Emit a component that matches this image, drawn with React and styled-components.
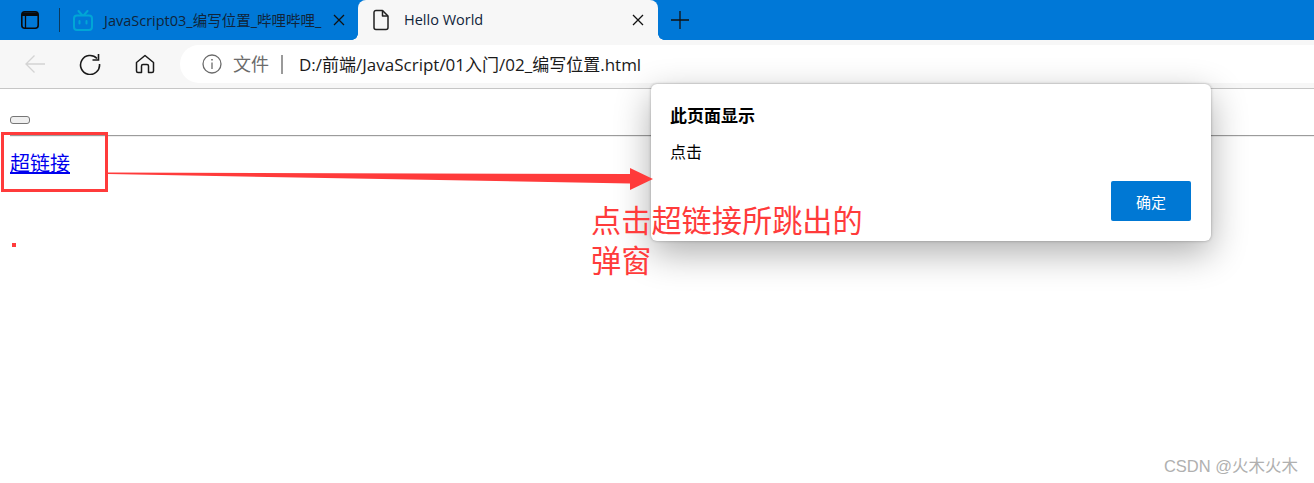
import React from 'react';
import styled, { createGlobalStyle } from 'styled-components';

const chromeBlue = '#0078d7';
const chromeGray = '#f7f7f7';
const markRed = '#ff3b3b';
const uiFont = '"Open Sans", "Noto Sans CJK SC", sans-serif';

const GlobalStyle = createGlobalStyle`
  html, body {
    margin: 0;
    padding: 0;
    background: white;
  }
`;

const Window = styled.div`
  position: relative;
  display: flex;
  flex-direction: column;
  width: 1314px;
  height: 483px;
  overflow: hidden;
  font-family: ${uiFont};
  background: white;
`;

const TabStrip = styled.div`
  display: flex;
  align-items: center;
  height: 40px;
  background: ${chromeBlue};
  color: #111;
`;

const StripButton = styled.div`
  display: flex;
  align-items: center;
  justify-content: center;
  width: ${props => props.width}px;
  height: 40px;
  flex-shrink: 0;
`;

const Divider = styled.div`
  width: 1px;
  height: 24px;
  background: #0b3a5e;
  flex-shrink: 0;
`;

const Tab = styled.div`
  position: relative;
  display: flex;
  align-items: center;
  width: ${props => props.width}px;
  height: 40px;
  flex-shrink: 0;
  box-sizing: border-box;
  padding-left: ${props => props.inset}px;
  font-size: 14.5px;
  white-space: nowrap;
  background: ${props => (props.active ? chromeGray : 'transparent')};
  border-radius: ${props => (props.active ? '8px 8px 0 0' : '0')};

  ${props =>
    props.active &&
    `
    &::before, &::after {
      content: '';
      position: absolute;
      bottom: 0;
      width: 6px;
      height: 6px;
    }
    &::before {
      left: -6px;
      background: radial-gradient(circle at 0 0, transparent 5.5px, ${chromeGray} 6px);
    }
    &::after {
      right: -6px;
      background: radial-gradient(circle at 100% 0, transparent 5.5px, ${chromeGray} 6px);
    }
  `}
`;

const TabTitle = styled.div`
  margin: -2px 0 0 ${props => props.gap}px;
  color: #10243a;
`;

const TabClose = styled.div`
  position: absolute;
  top: 14px;
  right: ${props => props.right}px;
  display: flex;
`;

const Toolbar = styled.div`
  display: flex;
  align-items: center;
  height: 48px;
  background: ${chromeGray};
  border-bottom: 1px solid #c6c6c6;
`;

const NavButton = styled.div`
  display: flex;
  align-items: center;
  justify-content: center;
  width: ${props => props.width}px;
  flex-shrink: 0;
`;

const AddressBar = styled.div`
  display: flex;
  align-items: center;
  flex: 1;
  height: 38px;
  padding-left: 22px;
  background: white;
  border-radius: 19px 0 0 19px;
  font-size: 17px;
  white-space: nowrap;
`;

const Scheme = styled.span`
  margin: -2px 0 0 11px;
  font-size: 18px;
  color: #6b6b6b;
`;

const SchemeBar = styled.span`
  width: 2px;
  height: 19px;
  margin: 0 16px 0 12px;
  background: #9a9a9a;
`;

const Url = styled.span`
  margin-top: -2px;
  color: #1a1a1a;
`;

const Page = styled.div`
  flex: 1;
  font-family: "Noto Sans CJK SC", sans-serif;
`;

const EmptyButton = styled.button`
  display: block;
  width: 20px;
  height: 8px;
  margin: 27px 0 0 10px;
  padding: 0;
  box-sizing: border-box;
  background: #efefef;
  border: 1px solid #767676;
  border-radius: 3px;
`;

const Rule = styled.hr`
  height: 0;
  margin: 11px 0 0 10px;
  border: none;
  border-top: 1px solid #9c9c9c;
  border-bottom: 1px solid #eeeeee;
`;

const LinkRow = styled.div`
  margin: 12px 0 0 10px;
  font-size: 20px;
  line-height: 28px;
`;

const PageLink = styled.a`
  color: #0000ee;
  text-decoration: underline;
`;

const MarkBox = styled.div`
  position: absolute;
  left: 1px;
  top: 132px;
  width: 107px;
  height: 60px;
  box-sizing: border-box;
  border: 3px solid ${markRed};
`;

const MarkDot = styled.div`
  position: absolute;
  left: 12px;
  top: 243px;
  width: 4px;
  height: 4px;
  background: ${markRed};
`;

const ArrowMark = styled.svg`
  position: absolute;
  left: 0;
  top: 0;
  pointer-events: none;
`;

const Note = styled.div`
  position: absolute;
  left: 591px;
  top: 199px;
  width: 285px;
  font-family: "Noto Sans CJK SC", sans-serif;
  font-size: 30.2px;
  line-height: 40px;
  color: ${markRed};
`;

const Dialog = styled.div`
  position: absolute;
  left: 651px;
  top: 84px;
  display: flex;
  flex-direction: column;
  width: 560px;
  height: 157px;
  box-sizing: border-box;
  padding: 19px 20px 20px 19px;
  background: white;
  border-radius: 6px;
  box-shadow: 0 0 3px rgba(0, 0, 0, 0.3), 0 12px 36px rgba(0, 0, 0, 0.32);
  font-family: "Noto Sans CJK SC", sans-serif;
  color: #000;
`;

const DialogTitle = styled.div`
  font-size: 17px;
  font-weight: 700;
  line-height: 24px;
`;

const DialogMessage = styled.div`
  margin-top: 13px;
  font-size: 16px;
  line-height: 22px;
`;

const DialogActions = styled.div`
  display: flex;
  justify-content: flex-end;
  margin-top: auto;
`;

const DialogButton = styled.button`
  width: 80px;
  height: 40px;
  padding: 0;
  border: none;
  border-radius: 2px;
  background: #0078d4;
  color: white;
  font-family: inherit;
  font-size: 15px;
`;

const Watermark = styled.div`
  position: absolute;
  right: 16px;
  top: 454px;
  font-family: "Liberation Sans", "Noto Sans CJK SC", sans-serif;
  font-size: 16.5px;
  line-height: 24px;
  color: #b0b0b0;
`;

const TabsIcon = () => (
  <svg width="18" height="18" viewBox="0 0 18 18" fill="none" stroke="#0a0a0a" strokeWidth="1.6">
    <rect x="0.800" y="0.800" width="16.400" height="16.400" rx="3" />
    <path d="M1 3.200h16" strokeWidth="3.600" />
    <path d="M4.500 5v12" strokeWidth="1.300" />
  </svg>
);

const TvIcon = () => (
  <svg width="20" height="21" viewBox="0 0 20 21" fill="none" stroke="#00a6d6" strokeWidth="2" strokeLinecap="round">
    <rect x="1" y="5.500" width="18" height="14.500" rx="3" />
    <path d="M5.500 1 9 5M14.500 1 11 5M6.500 11v2.500M13.500 11v2.500" />
  </svg>
);

const FileIcon = () => (
  <svg width="18" height="22" viewBox="0 0 18 22" fill="none" stroke="#222" strokeWidth="1.5" strokeLinejoin="round">
    <path d="M4 1.500h6.500L16 7v11.500a2 2 0 0 1-2 2H4a2 2 0 0 1-2-2v-15a2 2 0 0 1 2-2Z" />
    <path d="M10.500 1.500V7H16" />
  </svg>
);

const CloseIcon = () => (
  <svg width="12" height="12" viewBox="0 0 12 12" stroke="#111" strokeWidth="1.300">
    <path d="M1 1l10 10M11 1 1 11" />
  </svg>
);

const PlusIcon = () => (
  <svg width="18" height="18" viewBox="0 0 18 18" stroke="#111" strokeWidth="1.300">
    <path d="M9 0v18M0 9h18" />
  </svg>
);

const BackIcon = () => (
  <svg width="20" height="18" viewBox="0 0 20 18" fill="none" stroke="#d4d4d4" strokeWidth="1.300">
    <path d="M0.500 9h19.500M9.500 0.500 1 9l8.500 8.500" />
  </svg>
);

const ReloadIcon = () => (
  <svg width="22" height="22" viewBox="0 0 22 22" fill="none" stroke="#1a1a1a" strokeWidth="1.600">
    <path d="M18 5.500A9.500 9.500 0 1 0 20.500 11" />
    <path d="M19.500 1v6h-6" />
  </svg>
);

const HomeIcon = () => (
  <svg width="20" height="20" viewBox="0 0 20 20" fill="none" stroke="#1a1a1a" strokeWidth="1.500" strokeLinejoin="round">
    <path d="M10 1.500 1.500 8.500V17a1.500 1.500 0 0 0 1.500 1.500h3.500V12a1.500 1.500 0 0 1 1.500-1.500h4A1.500 1.500 0 0 1 13.500 12v6.500H17a1.500 1.500 0 0 0 1.500-1.500V8.500Z" />
  </svg>
);

const InfoIcon = () => (
  <svg width="20" height="20" viewBox="0 0 20 20" fill="none" stroke="#6b6b6b" strokeWidth="1.300">
    <circle cx="10" cy="10" r="9" />
    <path d="M10 8.500V15" />
    <path d="M10 5v1.500" strokeWidth="1.600" />
  </svg>
);

const App = () => (
  <Window>
    <GlobalStyle />
    <TabStrip>
      <StripButton width={59}>
        <TabsIcon />
      </StripButton>
      <Divider />
      <Tab width={298} inset={13}>
        <TvIcon />
        <TabTitle gap={11}>JavaScript03_编写位置_哔哩哔哩_</TabTitle>
        <TabClose right={13}>
          <CloseIcon />
        </TabClose>
      </Tab>
      <Tab active width={300} inset={14}>
        <FileIcon />
        <TabTitle gap={14}>Hello World</TabTitle>
        <TabClose right={14}>
          <CloseIcon />
        </TabClose>
      </Tab>
      <StripButton width={44}>
        <PlusIcon />
      </StripButton>
    </TabStrip>

    <Toolbar>
      <NavButton width={70}>
        <BackIcon />
      </NavButton>
      <NavButton width={40}>
        <ReloadIcon />
      </NavButton>
      <NavButton width={70}>
        <HomeIcon />
      </NavButton>
      <AddressBar>
        <InfoIcon />
        <Scheme>文件</Scheme>
        <SchemeBar />
        <Url>D:/前端/JavaScript/01入门/02_编写位置.html</Url>
      </AddressBar>
    </Toolbar>

    <Page>
      <EmptyButton />
      <Rule />
      <LinkRow>
        <PageLink href="#">超链接</PageLink>
      </LinkRow>
    </Page>

    <MarkBox />
    <MarkDot />
    <Dialog>
      <DialogTitle>此页面显示</DialogTitle>
      <DialogMessage>点击</DialogMessage>
      <DialogActions>
        <DialogButton>确定</DialogButton>
      </DialogActions>
    </Dialog>
    <ArrowMark width="1314" height="483">
      <polygon points="108,172.500 630,174 630,168 653,179 630,190 630,183.500 108,174" fill={markRed} />
    </ArrowMark>
    <Note>点击超链接所跳出的弹窗</Note>
    <Watermark>CSDN @火木火木</Watermark>
  </Window>
);

export default App;
